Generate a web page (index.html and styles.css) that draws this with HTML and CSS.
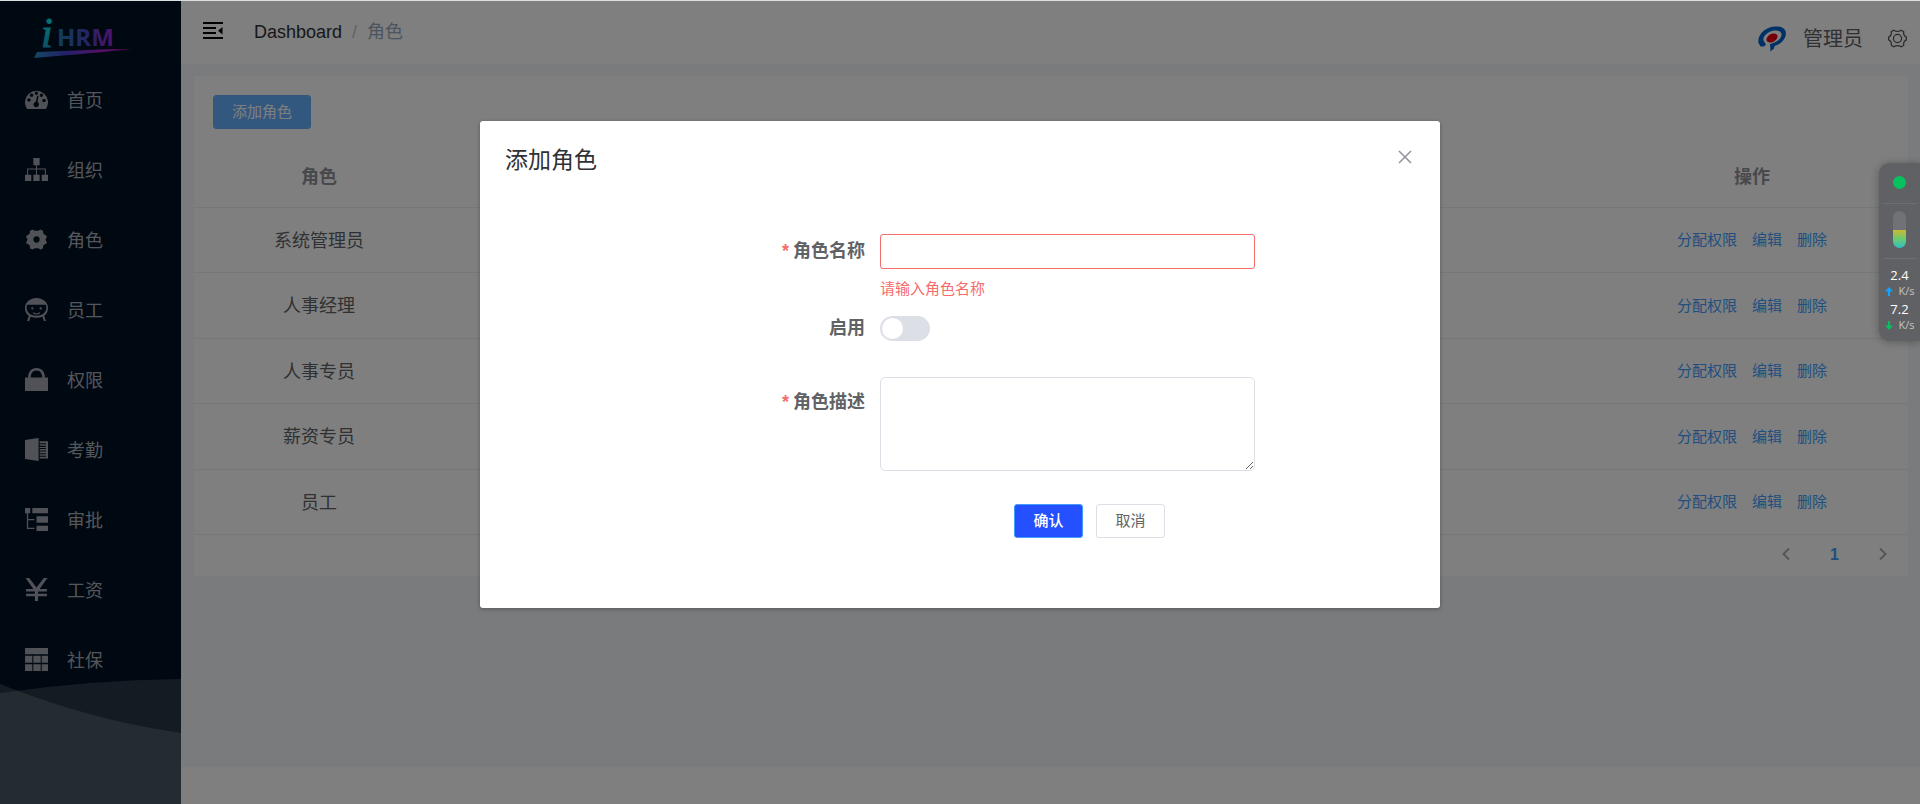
FILE: index.html
```html
<!DOCTYPE html>
<html lang="zh-CN">
<head>
<meta charset="utf-8">
<meta name="viewport" content="width=device-width, initial-scale=1">
<title>角色</title>
<link rel="stylesheet" href="styles.css">
</head>
<body>
<div class="app">
  <aside class="sidebar">
    <a class="logo" href="#" aria-label="iHRM">
      <svg width="104" height="46" viewBox="0 0 104 46">
        <defs>
          <linearGradient id="word" gradientUnits="userSpaceOnUse" x1="24" y1="0" x2="82" y2="0">
            <stop offset="0" stop-color="#1f80b0"/><stop offset=".5" stop-color="#4848c8"/><stop offset="1" stop-color="#b020d0"/>
          </linearGradient>
          <linearGradient id="dot" x1="0" y1="0" x2="0" y2="1">
            <stop offset="0" stop-color="#00fff6"/><stop offset="1" stop-color="#2090c0"/>
          </linearGradient>
          <linearGradient id="swoosh" x1="0" y1="0" x2="1" y2="0">
            <stop offset="0" stop-color="#2a90c0"/><stop offset=".3" stop-color="#4444d0"/><stop offset=".7" stop-color="#b020d0"/><stop offset="1" stop-color="#701080"/>
          </linearGradient>
        </defs>
        <text class="logo-i" x="7" y="32" fill="url(#dot)" stroke="url(#dot)">i</text>
        <text class="logo-word" x="23" y="31" fill="url(#word)">HRM</text>
        <path d="M0 43 3 37 78 34 99 34Q60 38 0 43Z" fill="url(#swoosh)"/>
      </svg>
    </a>
    <nav class="menu">
      <a class="menu-item" href="#"><svg class="menu-icon" viewBox="0 0 22 22"><path fill-rule="evenodd" d="M2 20A11 11 0 1 1 20 20ZM5.500 11.500a1.700 1.700 0 1 0-3.400 0 1.700 1.700 0 0 0 3.400 0M8 7a1.700 1.700 0 1 0-3.400 0A1.700 1.700 0 0 0 8 7M12.500 5a1.600 1.600 0 1 0-3.200 0 1.600 1.600 0 0 0 3.200 0M17.400 7A1.700 1.700 0 1 0 14 7a1.700 1.700 0 0 0 3.400 0M19.900 12a1.700 1.700 0 1 0-3.400 0 1.700 1.700 0 0 0 3.400 0M11.600 7.300 10.400 13.200A2.600 2.600 0 1 0 12 13.500L12.900 7.600Z"/></svg>首页</a>
      <a class="menu-item" href="#"><svg class="menu-icon" viewBox="0 0 22 22"><path d="M8 0h6v7h-2.500v3H20v6h2v6h-6v-6h3v-5h-7.500v5H14v6H8v-6h2.500v-5H3v5h3v6H0v-6h2v-6h8.500V7H8Z"/></svg>组织</a>
      <a class="menu-item" href="#"><svg class="menu-icon" viewBox="0 0 22 22"><path fill-rule="evenodd" d="M7 1.500 9.300 2.700H12.700L15 1.500 17.300 2.800 17.300 5 19 6.500 21 8 20.300 9.800 19.600 11 20.300 12.500 21 14.500 19 15.500 17.300 17 17.300 19.300 15 20.600 12.700 19.300H9.300L7 20.600 4.700 19.300 4.700 17 3 15.500 1 14.500 1.700 12.500 2.400 11 1.700 9.800 1 8 3 6.500 4.700 5 4.700 2.800ZM14 11a3 3 0 1 0-6 0 3 3 0 0 0 6 0"/></svg>角色</a>
      <a class="menu-item" href="#"><svg class="menu-icon" viewBox="0 0 22 22"><path fill-rule="evenodd" d="M11 0C17 0 22 4 22 9.500 22 13 20.500 15.500 18.300 17L20 22H18L16.700 18Q11 20 5.300 18L4 22H2L3.700 17C1.500 15.500 0 13 0 9.500 0 4 5 0 11 0M2 6.500C0 12.500 4.500 17 11 17s11-4.500 9-10.500Z"/><circle cx="7" cy="10" r="1.100"/><circle cx="15" cy="10" r="1.100"/><path d="M7.500 13.500Q11 16 14.500 13.500L14 15Q11 16.500 8 15Z"/></svg>员工</a>
      <a class="menu-item" href="#"><svg class="menu-icon" viewBox="0 0 22 22"><path fill-rule="evenodd" d="M0 9H3C3 3.500 6 0 11 0s8 3.500 8 9h3v13H0ZM5.500 9h11C16.500 5 14.500 2.300 11 2.300S5.500 5 5.500 9"/></svg>权限</a>
      <a class="menu-item" href="#"><svg class="menu-icon" viewBox="0 0 22 22"><path d="M0 2 13 0V22L0 20ZM14 3h8v16.500h-8v-1.500h6v-1h-6v-1.500h6v-1h-6v-1.500h6v-1h-6v-1.500h6v-1h-6V8.500h6v-1h-6V6h6V5h-6Z"/></svg>考勤</a>
      <a class="menu-item" href="#"><svg class="menu-icon" viewBox="0 0 22 22"><path d="M0 0h5v5H3v5.500h6v1.200H3V19h6v1.200H1.800V5H0ZM7 0h15v5H7ZM11 8h11v6H11ZM11 17h11v5H11Z"/></svg>审批</a>
      <a class="menu-item" href="#"><svg class="menu-icon" viewBox="0 0 22 22"><path d="M0.500 0H4L11 9 18 0h3.500L14 10.500h7V13h-8.500v2H21v2.500h-8.500V22h-3v-4.500H1V15h8.500v-2H1v-2.500h7Z"/></svg>工资</a>
      <a class="menu-item" href="#"><svg class="menu-icon" viewBox="0 0 22 22"><path d="M0 0h22v6H0ZM0 7.500h7V14H0ZM8 7.500h7V14H8ZM16 7.500h6V14h-6ZM0 15.500h7V22H0ZM8 15.500h7V22H8ZM16 15.500h6V22h-6Z"/></svg>社保</a>
    </nav>
    <svg class="waves" viewBox="0 0 181 126" preserveAspectRatio="none" aria-hidden="true">
      <path d="M0 15Q90 2 181 1V126H0Z"/><path d="M0 6Q90 42 181 55V126H0Z"/>
    </svg>
  </aside>

  <div class="page">
    <header class="topbar">
      <button class="icon-button" type="button" aria-label="收起菜单">
        <svg width="20" height="18" viewBox="0 0 20 18"><path d="M0 0h20v2H0ZM0 5h13v2H0ZM0 10h13v2H0ZM0 15h20v2H0ZM19.500 5v7.500L15 8.700Z"/></svg>
      </button>
      <nav class="breadcrumb">
        <a href="#">Dashboard</a><span class="slash">/</span><span class="current">角色</span>
      </nav>
      <div class="user">
        <svg class="avatar" width="36" height="36" viewBox="0 0 36 36">
          <circle cx="18" cy="18" r="18" fill="#fff"/>
          <path d="M4.500 22C3 14 11 5.500 22 5.500 31 5.500 34 11 30.500 17.500 28 22 24 24 20.500 25L20 27.500 16.500 30.500 16 23C23 21.500 27 18 27.500 14 28 10.500 24 9 20 9.500 13.500 10.500 8.500 15.500 9.500 19.500L12 23.500 10 25.500H6.500Z" fill="#0062cc"/>
          <ellipse cx="18" cy="17" rx="6" ry="4" transform="rotate(-30 18 17)" fill="#e60012"/>
        </svg>
        <span class="user-name">管理员</span>
        <button class="icon-button" type="button" aria-label="设置">
          <svg width="19" height="19" viewBox="0 0 20 20" fill="none" stroke="#505358" stroke-width="1.300"><circle cx="10" cy="10" r="4.300"/><path d="M6.200 1.200Q10 4 13.800 1.200L16.500 2.700Q16 7 19.300 8.500V11.500Q16 13 16.500 17.300L13.800 18.800Q10 16 6.200 18.800L3.500 17.300Q4 13 .7 11.500V8.500Q4 7 3.500 2.700Z"/></svg>
        </button>
      </div>
    </header>

    <main class="content">
      <section class="card">
        <div class="toolbar"><button class="button button-add" type="button">添加角色</button></div>
        <table class="roles">
          <colgroup><col class="col-role"><col><col class="col-actions"></colgroup>
          <thead><tr><th scope="col">角色</th><td></td><th scope="col">操作</th></tr></thead>
          <tbody>
            <tr><td>系统管理员</td><td></td><td><div class="actions"><a href="#">分配权限</a><a href="#">编辑</a><a href="#">删除</a></div></td></tr>
            <tr><td>人事经理</td><td></td><td><div class="actions"><a href="#">分配权限</a><a href="#">编辑</a><a href="#">删除</a></div></td></tr>
            <tr><td>人事专员</td><td></td><td><div class="actions"><a href="#">分配权限</a><a href="#">编辑</a><a href="#">删除</a></div></td></tr>
            <tr><td>薪资专员</td><td></td><td><div class="actions"><a href="#">分配权限</a><a href="#">编辑</a><a href="#">删除</a></div></td></tr>
            <tr><td>员工</td><td></td><td><div class="actions"><a href="#">分配权限</a><a href="#">编辑</a><a href="#">删除</a></div></td></tr>
          </tbody>
        </table>
        <nav class="pager" aria-label="分页">
          <button type="button" aria-label="上一页"><svg width="8" height="12" viewBox="0 0 8 12"><path d="M7 .5 1.500 6 7 11.500"/></svg></button>
          <button class="pager-current" type="button">1</button>
          <button type="button" aria-label="下一页"><svg width="8" height="12" viewBox="0 0 8 12"><path d="M1 .5 6.500 6 1 11.500"/></svg></button>
        </nav>
      </section>
    </main>
    <footer class="footer"></footer>
  </div>

  <div class="overlay">
    <div class="dialog" role="dialog" aria-modal="true" aria-labelledby="dialog-title">
      <header class="dialog-head">
        <h1 id="dialog-title">添加角色</h1>
        <button class="icon-button" type="button" aria-label="关闭"><svg width="14" height="14" viewBox="0 0 14 14" fill="none" stroke="#909399" stroke-width="1.500"><path d="M1 1 13 13M13 1 1 13"/></svg></button>
      </header>
      <form class="form">
        <div class="field field-name">
          <label class="required" for="name">角色名称</label>
          <div><input class="text-input" id="name" type="text" aria-invalid="true" aria-describedby="name-error"><p class="error" id="name-error">请输入角色名称</p></div>
        </div>
        <div class="field field-enabled">
          <label for="enabled">启用</label>
          <input class="switch" id="enabled" type="checkbox" role="switch">
        </div>
        <div class="field field-desc">
          <label class="required" for="desc">角色描述</label>
          <textarea class="text-area" id="desc"></textarea>
        </div>
        <div class="form-actions">
          <button class="button button-primary" type="button">确认</button>
          <button class="button" type="button">取消</button>
        </div>
      </form>
    </div>
  </div>

  <aside class="monitor">
    <span class="monitor-dot"></span>
    <div class="monitor-gauge"><span class="monitor-level"></span></div>
    <div class="rate"><b>2.4</b><span><svg width="8" height="9" viewBox="0 0 8 9" fill="#12a5ff"><path d="M4 0 8 4.500H5V9H3V4.500H0Z"/></svg>K/s</span></div>
    <div class="rate"><b>7.2</b><span><svg width="8" height="9" viewBox="0 0 8 9" fill="#07c160"><path d="M4 9 0 4.500H3V0H5V4.500H8Z"/></svg>K/s</span></div>
  </aside>
</div>
</body>
</html>
```
FILE: styles.css
```css
* { box-sizing: border-box; }

body {
  margin: 0;
  font-family: "Liberation Sans", "Noto Sans CJK SC", sans-serif;
  font-size: 18px;
  color: #606266;
}

button, input, textarea { font: inherit; color: inherit; }
a { color: inherit; text-decoration: none; }

.app {
  position: relative;
  display: flex;
  min-height: 100vh;
  border-top: 1px solid #d9dfdd;
}

/* Sidebar */
.sidebar {
  display: flex;
  flex-direction: column;
  flex: none;
  width: 181px;
  background: #001223;
}
.logo { height: 63px; padding: 14px 0 0 34px; }
.logo svg { display: block; overflow: visible; }
.logo-i { font: italic 42px "Liberation Serif", serif; stroke-width: 1px; }
.logo-word { font: bold 24px "Open Sans", sans-serif; }
.menu-item {
  display: flex;
  align-items: center;
  gap: 19px;
  height: 70px;
  padding-left: 25px;
  color: #a9adb6;
}
.menu-icon { width: 23px; height: 23px; fill: #a3a4b0; }
.waves { flex: 1; width: 100%; min-height: 110px; margin-top: -16px; }
.waves path { fill: rgba(255, 255, 255, .16); }

/* Page */
.page { display: flex; flex-direction: column; flex: 1; min-width: 0; background: #fff; }
.topbar { display: flex; align-items: center; height: 63px; padding: 0 13px 3px 22px; }
.icon-button { display: flex; padding: 0; border: 0; background: none; cursor: pointer; }
.breadcrumb { display: flex; align-items: center; gap: 10px; margin-left: 31px; padding-top: 2px; line-height: 28px; }
.breadcrumb a { color: #303133; }
.slash { color: #c0c4cc; }
.current { color: #97a8be; }
.user { display: flex; align-items: center; margin-left: auto; padding-top: 15px; }
.avatar { border-radius: 50%; }
.user-name { margin: 0 25px 0 13px; font-size: 20px; line-height: 30px; }

.content { flex: 1; padding: 12px 12px 12px 13px; background: #f4f6f9; }
.card { background: #fff; }
.toolbar { display: flex; padding: 19px 19px 16px; }
.button {
  height: 34px;
  padding: 0 18px;
  border: 1px solid #dcdfe6;
  border-radius: 3px;
  background: #fff;
  font-size: 15px;
  line-height: 20px;
  white-space: nowrap;
  cursor: pointer;
}
.button-add { border-color: #66b1ff; background: #66b1ff; color: #fff; }

.roles { width: 100%; border-collapse: collapse; table-layout: fixed; text-align: center; }
.col-role { width: 250px; }
.col-actions { width: 312px; }
.roles th, .roles td { height: 65px; padding: 0 0 2px; border-bottom: 1px solid #ebeef5; }
.roles thead th, .roles thead td { height: 62px; }
.roles th { color: #909399; }
.roles tbody tr:nth-child(even) td { height: 66px; }
.actions { display: flex; justify-content: center; gap: 15px; font-size: 15px; color: #409eff; }

.pager { display: flex; justify-content: flex-end; align-items: center; height: 41px; padding-right: 6px; }
.pager button { width: 38px; height: 28px; padding: 0; border: 0; background: none; font-weight: bold; font-size: 16px; }
.pager .pager-current { width: 59px; color: #409eff; }
.pager svg { fill: none; stroke: #a8abb2; stroke-width: 2; }
.footer { height: 37px; }

/* Dialog */
.overlay { position: absolute; inset: 0; padding-top: 120px; background: rgba(0, 0, 0, .5); }
.dialog {
  width: 50%;
  min-width: 640px;
  margin: 0 auto;
  padding: 25px 25px 70px;
  border-radius: 3px;
  background: #fff;
  box-shadow: 0 1px 4px rgba(0, 0, 0, .3);
}
.dialog-head { display: flex; justify-content: space-between; align-items: flex-start; padding-right: 3px; }
.dialog-head h1 { margin: 0; font-size: 23px; font-weight: 400; line-height: 28px; color: #303133; }
.dialog-head .icon-button { margin-top: 4px; }
.form { padding-top: 60px; }
.field { display: grid; grid-template-columns: 360fr 375fr 145fr; gap: 15px; }
.field label { font-weight: bold; line-height: 34px; text-align: right; }
.required::before { content: "*"; margin-right: 4px; color: #f56c6c; }
.field-name { margin-bottom: 16px; }
.field-enabled { margin-bottom: 36px; }
.field-desc { margin-bottom: 33px; }
.field-desc label { padding-top: 8px; }
.text-input {
  display: block;
  width: 100%;
  height: 35px;
  padding: 0 15px;
  border: 1px solid #f56c6c;
  border-radius: 3px;
  background: #fff;
}
.error { margin: 10px 0 0; font-size: 15px; line-height: 20px; color: #f56c6c; }
.field-enabled label { line-height: 26px; }
.switch {
  appearance: none;
  width: 50px;
  height: 25px;
  margin: 1px 0 0;
  padding: 2px;
  border-radius: 13px;
  background: #dcdfe6;
}
.switch::before { content: ""; display: block; width: 21px; height: 21px; border-radius: 50%; background: #fff; }
.switch:checked { background: #409eff; }
.switch:checked::before { margin-left: auto; }
.text-area {
  display: block;
  width: 100%;
  height: 94px;
  padding: 6px 15px;
  border: 1px solid #dcdfe6;
  border-radius: 5px;
  background: #fff;
  resize: vertical;
}
.form-actions { display: flex; gap: 13px; padding-left: 509px; }
.form-actions .button { width: 69px; }
.form-actions .button-primary { border-color: #409eff; background: #2450ff; font-weight: 500; color: #fff; }

/* Floating network monitor */
.monitor {
  position: absolute;
  top: 162px;
  right: 0;
  display: flex;
  flex-direction: column;
  align-items: center;
  width: 41px;
  height: 178px;
  padding-top: 13px;
  border-radius: 11px 0 0 11px;
  background: #5f6165;
  box-shadow: 0 1px 8px rgba(0, 0, 0, .3);
  font-family: "Open Sans", sans-serif;
  color: #fff;
}
.monitor-dot { width: 13px; height: 13px; border-radius: 50%; background: #07c160; }
.monitor-gauge {
  display: flex;
  justify-content: center;
  width: 34px;
  margin: 14px 0 8px;
  padding: 7px 0 10px;
  border: 1px solid #6b6e72;
  border-width: 1px 0;
}
.monitor-level {
  width: 13px;
  height: 37px;
  border-radius: 7px;
  background: linear-gradient(#717277 50%, #d0b82c 50%, #6bcb70 75%, #30bfc4);
}
.rate { width: 32px; height: 34px; text-align: center; }
.rate b { display: block; font-size: 13px; font-weight: 400; line-height: 17px; }
.rate span { display: flex; align-items: center; justify-content: space-between; padding: 0 1px; font-size: 11px; line-height: 14px; color: #c4c5c7; }
```
